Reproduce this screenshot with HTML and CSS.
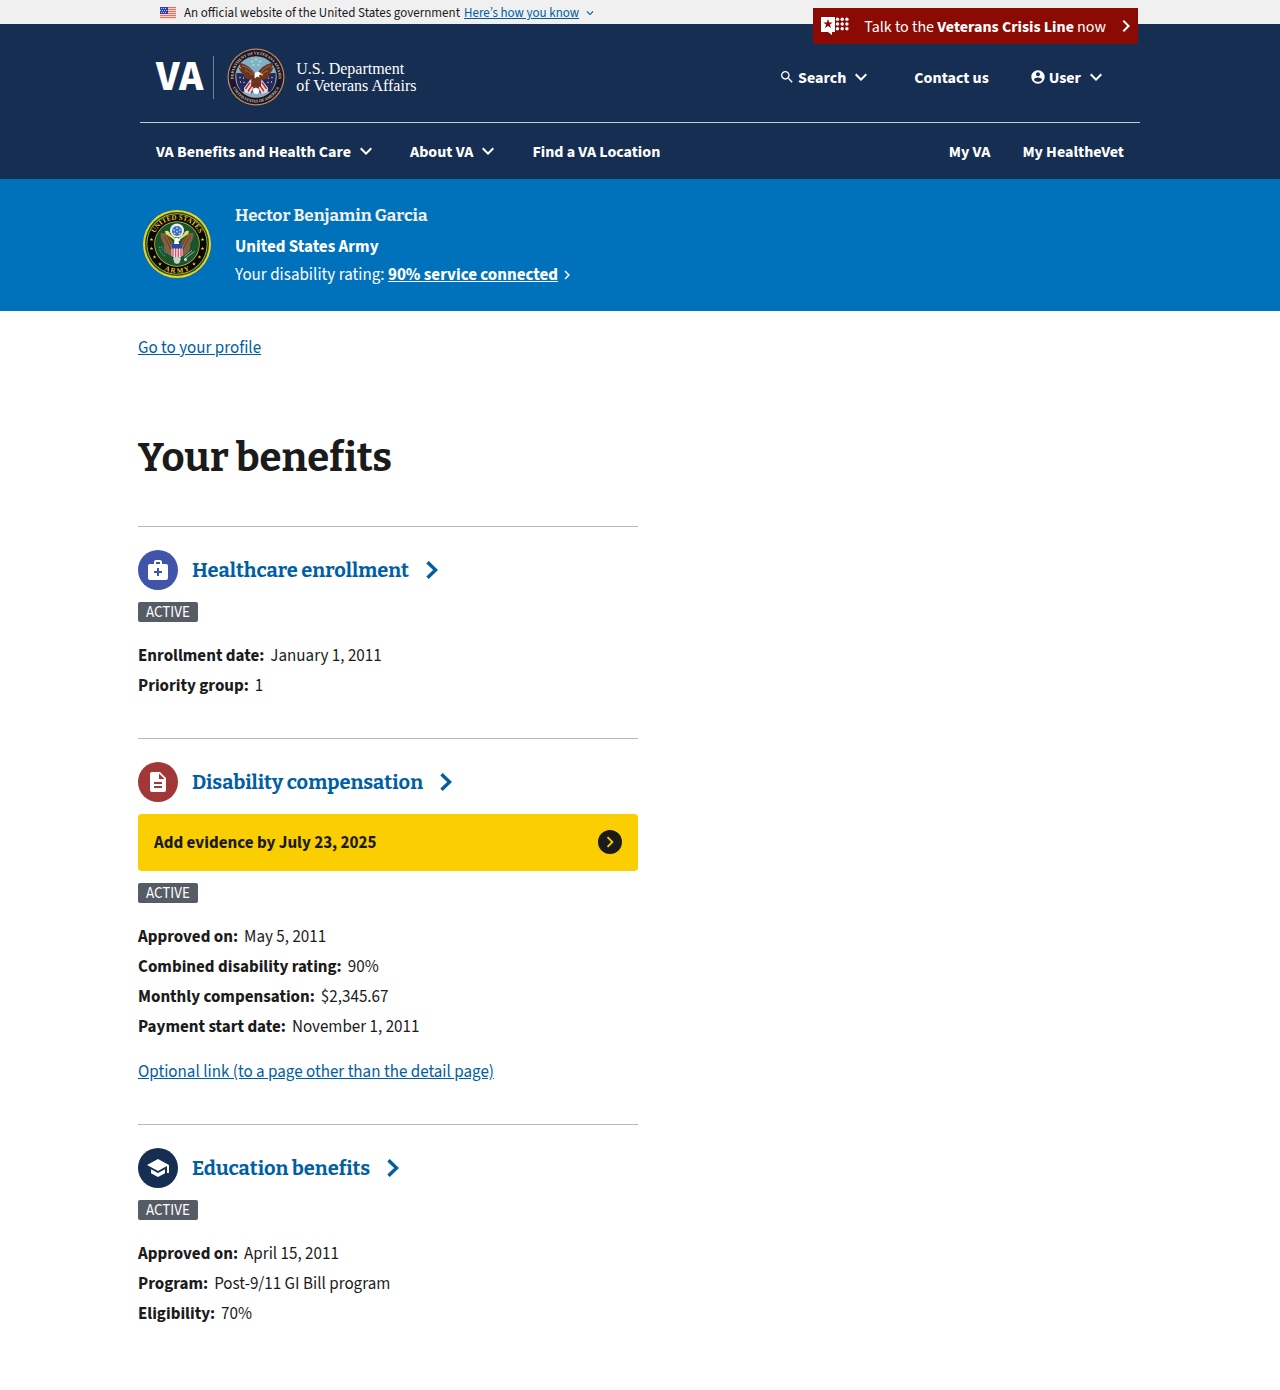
FILE: index.html
```html
<!DOCTYPE html>
<html lang="en">
<head>
<meta charset="utf-8">
<meta name="viewport" content="width=device-width, initial-scale=1">
<title>Your benefits | Veterans Affairs</title>
<link rel="stylesheet" href="styles.css">
</head>
<body>
<svg class="sprite" aria-hidden="true">
  <symbol id="down" viewBox="0 0 24 24"><path d="M16.59 8.59 12 13.17 7.41 8.59 6 10l6 6 6-6z"/></symbol>
  <symbol id="next" viewBox="0 0 24 24"><path d="M10 6 8.59 7.41 13.17 12l-4.58 4.59L10 18l6-6z"/></symbol>
  <symbol id="arrow" viewBox="0 0 12 18"><path d="M1.5 1.2 9.6 9l-8.1 7.8" fill="none" stroke="currentColor" stroke-width="3.4"/></symbol>
  <symbol id="star" viewBox="-10 -10 20 20"><path d="M0-10 2.4-3.1 9.5-3.1 3.8 1.2 5.9 8.1 0 4-5.9 8.1-3.8 1.2-9.5-3.1-2.4-3.1z"/></symbol>
</svg>

<div class="banner">
  <div class="wrap banner-row">
    <svg class="flag" viewBox="0 0 16 12" aria-hidden="true">
      <path fill="#ffd9d2" d="M0 0h16v12H0z"/>
      <path stroke="#ff6550" d="M0 .5h16M0 2.5h16M0 4.5h16M0 6.5h16M0 8.5h16M0 10.5h16"/>
      <path fill="#2a3fc0" d="M0 0h8v7H0z"/>
      <path stroke="#c5cbf2" stroke-dasharray="1 1" d="M1 1.5h6M0 3.5h8M1 5.5h6"/>
    </svg>
    <span>An official website of the United States government</span>
    <button class="how" type="button"><span>Here’s how you know</span><svg aria-hidden="true"><use href="#down"/></svg></button>
  </div>
</div>

<header class="header">
  <div class="wrap header-wrap">
    <a class="crisis" href="#crisis">
      <svg class="crisis-icon" viewBox="0 0 29 18" aria-hidden="true">
        <path fill="#fff" d="M1 0h14v15h-3v3l-4-3H1z"/>
        <use href="#star" x="3" y="2" width="10" height="10" fill="#8b0a03"/>
        <g fill="#fff"><circle cx="17.5" cy="2.3" r="1.7"/><circle cx="22.2" cy="2.3" r="1.7"/><circle cx="26.9" cy="2.3" r="1.7"/><circle cx="17.5" cy="7" r="1.7"/><circle cx="22.2" cy="7" r="1.7"/><circle cx="26.9" cy="7" r="1.7"/><circle cx="17.5" cy="11.7" r="1.7"/><circle cx="22.2" cy="11.7" r="1.7"/><circle cx="26.9" cy="11.7" r="1.7"/></g>
      </svg>
      <span class="label">Talk to the <b>Veterans Crisis Line</b> now</span>
      <svg class="crisis-next" aria-hidden="true"><use href="#next"/></svg>
    </a>

    <div class="masthead">
      <a class="logo" href="#home">
        <span class="logo-va">VA</span>
        <svg class="seal" viewBox="0 0 116 116" aria-hidden="true">
          <defs>
            <path id="va-top" d="M15.700 73.400A45 45 0 1 1 100.300 73.400"/>
            <path id="va-bottom" d="M7 58a51 51 0 0 0 102 0"/>
          </defs>
          <circle cx="58" cy="58" r="57" fill="#c08a45"/>
          <circle cx="58" cy="58" r="54.5" fill="#17163a"/>
          <circle cx="58" cy="58" r="41.5" fill="#c9a45c"/>
          <circle cx="58" cy="58" r="40" fill="#78b2d6"/>
          <g class="seal-text" fill="#dcc98a" font-size="8">
            <text text-anchor="middle"><textPath href="#va-top" startOffset="50%">DEPARTMENT OF VETERANS AFFAIRS</textPath></text>
            <text text-anchor="middle"><textPath href="#va-bottom" startOffset="50%">UNITED STATES OF AMERICA</textPath></text>
          </g>
          <g fill="#f0d94c"><circle cx="58" cy="23" r="2"/><circle cx="50" cy="27" r="2"/><circle cx="66" cy="27" r="2"/><circle cx="53" cy="34" r="2"/><circle cx="63" cy="34" r="2"/></g>
          <path fill="#22275c" d="M19 50q17-1 27 9l-2 26-14 3Q17 74 19 50zM97 50q-17-1-27 9l2 26 14 3q13-14 11-38z"/>
          <path fill="#e8e4ea" d="m34 80 12-16 10 8-8 20-13-4zm48 0L70 64l-10 8 8 20 13-4z"/>
          <path stroke="#b8303c" stroke-width="3" fill="none" d="m37 82 9-13m-4 18 10-15m-4 19 7-14m24 5-9-13m4 18L64 72m4 19-7-14"/>
          <g fill="#dfe3f2"><circle cx="26" cy="59" r="1.3"/><circle cx="33" cy="60" r="1.3"/><circle cx="27" cy="68" r="1.3"/><circle cx="34" cy="69" r="1.3"/><circle cx="90" cy="59" r="1.3"/><circle cx="83" cy="60" r="1.3"/><circle cx="89" cy="68" r="1.3"/><circle cx="82" cy="69" r="1.3"/></g>
          <path fill="#6b351d" d="M58 56Q48 34 24 29q1 8 5 12-4-1-6-3 3 11 13 16l-4 1q7 9 17 8l-1 12 10 9 10-9 1-12q14 0 18-9l-4-1q8-5 10-15l-5 3q4-5 4-12-25 5-34 27z"/>
          <path fill="none" stroke="#a8683b" stroke-width="2" d="M30 35q17 5 23 18M35 44q9 2 15 10M87 35q-15 5-20 17M82 45q-8 2-13 10"/>
          <path fill="#fff" d="M56 50q5-6 11 0l3 3-6 1 1 5-5-2-4 4q-2-6 0-11z"/>
          <path fill="#e6b53c" d="m67 50 5 2-1 4-4-3z"/>
          <path fill="#fff" d="m51 82 7-3 7 4-3 9-8-1z"/>
        </svg>
        <span class="logo-name">U.S. Department<br>of Veterans Affairs</span>
      </a>
      <div class="tools">
        <button class="tool" type="button"><svg class="search" viewBox="0 0 24 24" aria-hidden="true"><path d="M15.5 14h-.79l-.28-.27C15.41 12.59 16 11.11 16 9.5 16 5.91 13.09 3 9.5 3S3 5.91 3 9.5 5.91 16 9.5 16c1.61 0 3.09-.59 4.23-1.57l.27.28v.79l5 4.99L20.49 19l-4.99-5zm-6 0C7.01 14 5 11.99 5 9.5S7.01 5 9.5 5 14 7.01 14 9.5 11.99 14 9.5 14z"/></svg><span class="label">Search</span><svg class="chevron" aria-hidden="true"><use href="#down"/></svg></button>
        <a class="tool" href="#contact"><span class="label">Contact us</span></a>
        <button class="tool" type="button"><svg class="person" viewBox="0 0 24 24" aria-hidden="true"><path d="M12 2C6.48 2 2 6.48 2 12s4.48 10 10 10 10-4.48 10-10S17.52 2 12 2zm0 3c1.66 0 3 1.34 3 3s-1.34 3-3 3-3-1.34-3-3 1.34-3 3-3zm0 14.2c-2.5 0-4.71-1.28-6-3.22.03-1.99 4-3.08 6-3.08 1.99 0 5.97 1.09 6 3.08-1.29 1.94-3.5 3.22-6 3.22z"/></svg><span class="label">User</span><svg class="chevron" aria-hidden="true"><use href="#down"/></svg></button>
      </div>
    </div>

    <nav class="nav" aria-label="Main">
      <button class="tool" type="button"><span class="label">VA Benefits and Health Care</span><svg class="chevron" aria-hidden="true"><use href="#down"/></svg></button>
      <button class="tool" type="button"><span class="label">About VA</span><svg class="chevron" aria-hidden="true"><use href="#down"/></svg></button>
      <a class="tool" href="#locations"><span class="label">Find a VA Location</span></a>
      <a class="tool nav-right" href="#myva"><span class="label">My VA</span></a>
      <a class="tool" href="#healthevet"><span class="label">My HealtheVet</span></a>
    </nav>
  </div>
</header>

<section class="profile" aria-label="Profile">
  <div class="content profile-row">
    <svg class="army" viewBox="0 0 136 136" aria-hidden="true">
      <defs>
        <path id="army-top" d="M19 68a49 49 0 0 1 98 0"/>
        <path id="army-bottom" d="M10 68a58 58 0 0 0 116 0"/>
      </defs>
      <circle cx="68" cy="68" r="68" fill="#f0d21c"/>
      <circle cx="68" cy="68" r="64" fill="#19542f"/>
      <circle cx="68" cy="68" r="61" fill="#d4bd27"/>
      <circle cx="68" cy="68" r="59.5" fill="#070806"/>
      <circle cx="68" cy="68" r="45.5" fill="#d4bd27"/>
      <circle cx="68" cy="68" r="44" fill="#19542f"/>
      <g class="seal-text" fill="#e5c52b" font-size="14">
        <text text-anchor="middle"><textPath href="#army-top" startOffset="50%">UNITED STATES</textPath></text>
        <text text-anchor="middle"><textPath href="#army-bottom" startOffset="50%">A R M Y</textPath></text>
      </g>
      <g fill="#f3d222">
        <use href="#star" x="13" y="55" width="8" height="8"/><use href="#star" x="13" y="73" width="8" height="8"/><use href="#star" x="19" y="90" width="8" height="8"/><use href="#star" x="30" y="104" width="8" height="8"/>
        <use href="#star" x="115" y="55" width="8" height="8"/><use href="#star" x="115" y="73" width="8" height="8"/><use href="#star" x="109" y="90" width="8" height="8"/><use href="#star" x="98" y="104" width="8" height="8"/>
      </g>
      <path fill="#86603c" d="M60 66 48 47l-13-1q0 13 7 22-2 8 3 16l12 9 6-3zM76 66l12-19 13-1q0 13-7 22 2 8-3 16l-12 9-6-3z"/>
      <path fill="none" stroke="#57391f" stroke-width="1.5" d="m42 51 15 30M48 50l10 21m36-20L79 81m9-31L78 71"/>
      <path fill="#e8dc74" d="M44 42q8-2 10 6l12 9-2 4-15-11q-5-2-5-8zM92 42q-8-2-10 6L70 57l2 4 15-11q5-2 5-8z"/>
      <circle cx="68" cy="41" r="14" fill="#eef1ee"/><circle cx="68" cy="42" r="10" fill="#3b6fc0"/>
      <g fill="#d8e4f8"><circle cx="68" cy="36" r="1.7"/><circle cx="62" cy="40" r="1.7"/><circle cx="74" cy="40" r="1.7"/><circle cx="68" cy="43" r="1.7"/><circle cx="63" cy="47" r="1.7"/><circle cx="73" cy="47" r="1.7"/></g>
      <path fill="#fff" d="M63 58q5-4 9 0l3 3-4 1 2 8H62z"/>
      <path fill="#f4e9ec" d="M57 69h22v22q-4 4-11 5-7-1-11-5z"/>
      <path stroke="#dd4a62" stroke-width="2.6" d="M60 76v16M65.3 76v19M70.6 76v19M76 76v16"/>
      <path fill="#2549a5" d="M57 68h22v9H57z"/>
      <path fill="#c9cfcb" d="m60 96 8-3 8 3-3 10-5 2-5-2z"/>
      <path fill="none" stroke="#368b67" stroke-width="3" stroke-dasharray="3 2" d="M33 73q0 13 12 20m-8-20q2 10 15 15"/>
      <path fill="none" stroke="#9caea0" stroke-width="2" d="m83 98 20-15m-20 10 15-12"/><circle cx="85" cy="99" r="3" fill="#d8ddd8"/>
    </svg>
    <div class="profile-text">
      <p class="name">Hector Benjamin Garcia</p>
      <p class="branch">United States Army</p>
      <p class="rating">Your disability rating: <a href="#rating">90% service connected</a><svg aria-hidden="true"><use href="#next"/></svg></p>
    </div>
  </div>
</section>

<main class="content main">
  <a class="link" href="#profile">Go to your profile</a>
  <h1>Your benefits</h1>

  <section class="benefit">
    <h2><span class="disc health"><svg viewBox="0 0 24 24" aria-hidden="true"><path d="M20 6h-4V4c0-1.100-.9-2-2-2h-4c-1.100 0-2 .9-2 2v2H4c-1.100 0-2 .9-2 2v12c0 1.100.9 2 2 2h16c1.100 0 2-.9 2-2V8c0-1.100-.9-2-2-2zM10 4h4v2h-4V4zm6 11h-3v3h-2v-3H8v-2h3v-3h2v3h3v2z"/></svg></span><a href="#health">Healthcare enrollment<svg class="arrow" aria-hidden="true"><use href="#arrow"/></svg></a></h2>
    <span class="tag">ACTIVE</span>
    <dl>
      <div><dt>Enrollment date:</dt><dd>January 1, 2011</dd></div>
      <div><dt>Priority group:</dt><dd>1</dd></div>
    </dl>
  </section>

  <section class="benefit">
    <h2><span class="disc disability"><svg viewBox="0 0 24 24" aria-hidden="true"><path d="M14 2H6c-1.100 0-1.990.9-1.990 2L4 20c0 1.100.89 2 1.990 2H18c1.100 0 2-.9 2-2V8l-6-6zm2 16H8v-2h8v2zm0-4H8v-2h8v2zm-3-5V3.500L18.500 9H13z"/></svg></span><a href="#disability">Disability compensation<svg class="arrow" aria-hidden="true"><use href="#arrow"/></svg></a></h2>
    <a class="alert" href="#evidence"><span class="label">Add evidence by July 23, 2025</span><span class="go"><svg aria-hidden="true"><use href="#next"/></svg></span></a>
    <span class="tag">ACTIVE</span>
    <dl>
      <div><dt>Approved on:</dt><dd>May 5, 2011</dd></div>
      <div><dt>Combined disability rating:</dt><dd>90%</dd></div>
      <div><dt>Monthly compensation:</dt><dd>$2,345.67</dd></div>
      <div><dt>Payment start date:</dt><dd>November 1, 2011</dd></div>
    </dl>
    <a class="link more" href="#other">Optional link (to a page other than the detail page)</a>
  </section>

  <section class="benefit">
    <h2><span class="disc education"><svg viewBox="0 0 24 24" aria-hidden="true"><path d="M5 13.180v4L12 21l7-3.820v-4L12 17l-7-3.820zM12 3L1 9l11 6 9-4.910V17h2V9L12 3z"/></svg></span><a href="#education">Education benefits<svg class="arrow" aria-hidden="true"><use href="#arrow"/></svg></a></h2>
    <span class="tag">ACTIVE</span>
    <dl>
      <div><dt>Approved on:</dt><dd>April 15, 2011</dd></div>
      <div><dt>Program:</dt><dd>Post-9/11 GI Bill program</dd></div>
      <div><dt>Eligibility:</dt><dd>70%</dd></div>
    </dl>
  </section>
</main>
</body>
</html>
```
FILE: styles.css
```css
* { box-sizing: border-box; }

body {
  margin: 0;
  background: #fff;
  color: #1b1b1b;
  font-family: "Source Sans 3", "Source Sans Pro", "Noto Sans CJK KR", sans-serif;
  font-size: 17px;
  line-height: 30px;
}

p, h1, h2, dl, dd { margin: 0; }
a { color: inherit; }
svg { display: block; flex: none; fill: currentColor; }
button {
  padding: 0;
  border: 0;
  background: none;
  color: inherit;
  font: inherit;
  cursor: pointer;
}
.sprite { position: absolute; width: 0; height: 0; }
.wrap { max-width: 1000px; margin: 0 auto; }
.content { max-width: 1004px; margin: 0 auto; }

/* Text beside an icon, set to share the icon's optical centre */
.label { padding-top: 2px; line-height: 24px; }

/* Government banner */
.banner { padding-top: 2px; background: #f0f0f0; font-size: 13px; line-height: 22px; }
.banner-row { display: flex; align-items: center; gap: 4px; padding: 0 20px; }
.flag { width: 16px; height: 12px; margin-right: 4px; }
.how { display: flex; align-items: center; gap: 4px; color: #005ea2; }
.how span { text-decoration: underline; }
.how svg { width: 14px; height: 14px; }

/* Header */
.header { background: #162e51; color: #fff; font-weight: 700; font-size: 16px; }
.header a { text-decoration: none; }
.header-wrap { position: relative; }
.crisis {
  position: absolute;
  top: -16px;
  right: 2px;
  display: flex;
  align-items: center;
  gap: 15px;
  height: 36px;
  padding: 0 0 0 7px;
  border-radius: 0 0 3px 3px;
  background: #8b0a03;
  font-weight: 400;
}
.crisis-icon { width: 29px; height: 18px; }
.crisis-next { width: 24px; height: 24px; margin-left: -7px; }
.masthead {
  display: flex;
  justify-content: space-between;
  align-items: center;
  height: 99px;
  padding: 8px 32px 0 16px;
  border-bottom: 1px solid #c9cdd3;
}
.logo { display: flex; align-items: center; }
.logo-va {
  padding-right: 10px;
  border-right: 1px solid #73829a;
  font-size: 42px;
  font-weight: 800;
  line-height: 43px;
}
.seal { width: 58px; height: 58px; margin: 0 11px 0 13px; }
.seal-text { font-family: "Liberation Serif", serif; font-weight: 700; }
.logo-name { font: 400 16px/17px "Liberation Serif", serif; }
.tools { display: flex; gap: 41px; }
.tool { display: flex; align-items: center; gap: 3px; }
.search, .person { width: 16px; height: 16px; }
.chevron { width: 24px; height: 24px; }
.nav { display: flex; gap: 32px; min-height: 56px; padding: 0 16px; }
.nav-right { margin-left: auto; }

/* Profile band */
.profile { background: #0071bb; color: #fff; }
.profile-row { display: flex; align-items: center; gap: 24px; padding: 21px 5px 23px; }
.army { width: 68px; height: 68px; }
.name { color: #f0f0f0; font: 700 17px/32px "Bitter", "Liberation Serif", serif; }
.branch { font-weight: 700; }
.rating { display: flex; align-items: center; line-height: 26px; white-space: pre; }
.rating a { font-weight: 700; }
.rating svg { width: 18px; height: 18px; }

/* Benefits list */
.main { padding: 22px 0 62px; }
.link { display: table; color: #005ea2; }
h1 {
  margin: 70px 0 43px;
  font: 700 40px/50px "Bitter", "Liberation Serif", serif;
}
.benefit {
  max-width: 500px;
  padding: 23px 0 37px;
  border-top: 1px solid #b4b8be;
}
.benefit h2 { display: flex; align-items: center; gap: 14px; margin-bottom: 12px; }
.benefit h2 a {
  display: flex;
  align-items: center;
  gap: 17px;
  color: #005ea2;
  font: 700 20px/30px "Bitter", "Liberation Serif", serif;
  text-decoration: none;
}
.arrow { width: 12px; height: 18px; }
.disc {
  display: grid;
  place-items: center;
  width: 40px;
  height: 40px;
  border-radius: 50%;
  color: #fff;
}
.disc svg { width: 24px; height: 24px; }
.health { background: #4055a9; }
.disability { background: #a23737; }
.education { background: #162e51; }
.tag {
  display: table;
  padding: 2px 8px 0;
  border-radius: 2px;
  background: #565c65;
  color: #fff;
  font-size: 15px;
  line-height: 18px;
}
.alert {
  display: flex;
  justify-content: space-between;
  align-items: center;
  margin-bottom: 12px;
  padding: 15px 16px 16px;
  border-radius: 4px;
  background: #face00;
  font-weight: 700;
  text-decoration: none;
}
.go {
  display: grid;
  place-items: center;
  width: 24px;
  height: 24px;
  border-radius: 50%;
  background: #1b1b1b;
  color: #face00;
}
.go svg { width: 22px; height: 22px; }
dl { margin-top: 19px; }
dl div { display: flex; gap: 6px; }
dt { font-weight: 700; }
.more { margin-top: 15px; }
```
